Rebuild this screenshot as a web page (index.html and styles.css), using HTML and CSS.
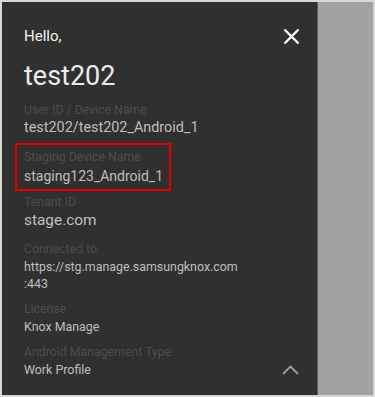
FILE: index.html
```html
<!DOCTYPE html>
<html lang="en">
<head>
  <meta charset="UTF-8" />
  <meta name="viewport" content="width=device-width, initial-scale=1" />
  <title>Profile Drawer</title>
  <link rel="stylesheet" href="styles.css">
</head>
<body>
  <div class="frame">
    <!-- Drawer -->
    <aside class="drawer">
      <div class="drawer-header">
        <span class="greeting">Hello,</span>
        <svg class="close-icon" width="17" height="17" viewBox="0 0 17 17">
          <path d="M1.5 1.5 L15.5 15.5 M15.5 1.5 L1.5 15.5" stroke="#ffffff" stroke-width="2.4" fill="none" />
        </svg>
      </div>
      <h1 class="user-name">test202</h1>

      <div class="info-item first">
        <div class="info-label">User ID / Device Name</div>
        <div class="info-value">test202/test202_Android_1</div>
      </div>
      <div class="info-item highlight">
        <div class="info-label">Staging Device Name</div>
        <div class="info-value">staging123_Android_1</div>
      </div>
      <div class="info-item">
        <div class="info-label">Tenant ID</div>
        <div class="info-value large">stage.com</div>
      </div>
      <div class="info-item spaced">
        <div class="info-label">Connected to</div>
        <div class="info-value small">https://stg.manage.samsungknox.com<br>:443</div>
      </div>
      <div class="info-item">
        <div class="info-label">License</div>
        <div class="info-value small">Knox Manage</div>
      </div>
      <div class="info-item">
        <div class="info-label">Android Management Type</div>
        <div class="info-value small value-row">
          <span>Work Profile</span>
          <svg class="chevron" width="17" height="10" viewBox="0 0 17 10">
            <path d="M1 9 L8.5 1.5 L16 9" stroke="#9c9c9c" stroke-width="1.9" fill="none" />
          </svg>
        </div>
      </div>
    </aside>
    <!-- Dimmed page behind drawer -->
    <div class="backdrop"></div>
  </div>
</body>
</html>
```

FILE: styles.css
```css
/* Global */
body {
  margin: 0;
  padding: 0;
  font-family: Roboto, "Noto Sans", sans-serif;
}
.frame {
  display: flex;
  height: 393px;
  border: 2px solid #d6d6d6;
  background: #a3a2a0;
}
/* Drawer */
.drawer {
  width: 293px;
  padding: 24px 0 0 22px;
  background: #303030;
  border-right: 1px solid #5e5e5d;
}
.backdrop {
  flex: 1;
}
.drawer-header {
  display: flex;
  justify-content: space-between;
  align-items: center;
  padding-right: 17px;
}
.greeting {
  font-size: 15px;
  line-height: 20px;
  color: #f2f2f2;
}
.user-name {
  margin: 14px 0 0;
  font-size: 27px;
  font-weight: 400;
  line-height: 32px;
  color: #ececec;
}
/* Info list */
.info-item {
  margin-top: 9px;
}
.info-item.first {
  margin-top: 10px;
}
.info-item.spaced {
  margin-top: 11px;
}
.info-label {
  font-size: 12.3px;
  line-height: 16px;
  color: #4d4d4d;
}
.info-value {
  margin-top: 1px;
  font-size: 14.4px;
  line-height: 18px;
  color: #bfbfbf;
}
.info-value.large {
  font-size: 15.4px;
  line-height: 19px;
}
.info-value.small {
  font-size: 12.4px;
  line-height: 17px;
}
/* Red annotation box */
.info-item.highlight {
  width: fit-content;
  margin: 6px 0 0 -9px;
  padding: 4px 6px 4px 7px;
  border: 2px solid #e60000;
}
.info-item.highlight .info-value {
  margin-top: 2px;
  font-size: 14px;
}
.info-item.highlight + .info-item {
  margin-top: 3px;
}
.value-row {
  display: flex;
  justify-content: space-between;
  align-items: center;
  padding-right: 18px;
}
```
